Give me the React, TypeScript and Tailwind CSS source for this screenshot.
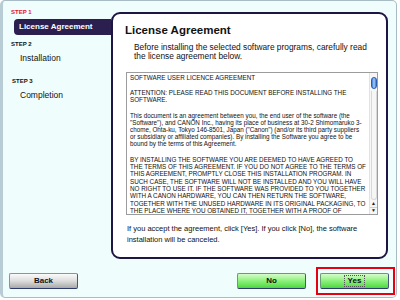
export default function App() {
  return (
    <div className="w-[400px] h-[300px] bg-white font-['Liberation_Sans',Arial,sans-serif] text-[#111]">
      <div className="w-[397px] h-[298px] flex flex-col border border-[#a8bcc5] border-l-[3px] border-l-[#b7ccd4] rounded-[5px] bg-[#f0fdfd]">
        {/* Top area */}
        <div className="flex">
          {/* Steps sidebar */}
          <aside className="w-[108px] shrink-0 flex flex-col pt-[7px]">
            <div className="pl-[8px] h-[8px] leading-[8px] text-[6px] font-bold text-[#e8141c]">STEP 1</div>
            <div className="mt-[3px] ml-[11px] h-[16px] flex items-center pl-[5px] rounded-l-[4px] bg-[#2b1f4f] text-white text-[8px] font-bold">
              License Agreement
            </div>
            <div className="mt-[4.5px] pl-[8px] h-[8px] leading-[8px] text-[6px] font-bold">STEP 2</div>
            <div className="mt-[4.5px] pl-[17px] h-[12px] leading-[12px] text-[8.5px]">Installation</div>
            <div className="mt-[12.7px] pl-[9px] h-[8px] leading-[8px] text-[6px] font-bold">STEP 3</div>
            <div className="mt-[4.3px] pl-[17px] h-[12px] leading-[12px] text-[8.5px]">Completion</div>
          </aside>

          {/* Main panel */}
          <section className="mt-[11px] w-[277px] h-[247px] shrink-0 flex flex-col border-2 border-[#1d1645] rounded-[9px] bg-white pt-[9px]">
            <h1 className="pl-[12px] text-[11.5px] leading-[14px] font-bold">License Agreement</h1>
            <p className="mt-[5.6px] pl-[21px] text-[8.35px] leading-[9.7px]">
              Before installing the selected software programs, carefully read
              <br />
              the license agreement below.
            </p>

            {/* Agreement text box */}
            <div className="mt-[9.8px] ml-[13px] w-[252px] h-[143px] shrink-0 flex border border-[#9c9c9c] bg-white overflow-hidden">
              <div className="flex-1 overflow-hidden pl-[3px] pt-[1px] text-[6.3px] leading-[7px] whitespace-nowrap">
                <p>SOFTWARE USER LICENCE AGREEMENT</p>
                <p className="mt-[8.5px]">
                  ATTENTION: PLEASE READ THIS DOCUMENT BEFORE INSTALLING THE
                  <br />
                  SOFTWARE.
                </p>
                <p className="mt-[8.5px]">
                  This document is an agreement between you, the end user of the software (the
                  <br />
                  "Software"), and CANON Inc., having its place of business at 30-2 Shimomaruko 3-
                  <br />
                  chome, Ohta-ku, Tokyo 146-8501, Japan ("Canon") (and/or its third party suppliers
                  <br />
                  or subsidiary or affiliated companies). By installing the Software you agree to be
                  <br />
                  bound by the terms of this Agreement.
                </p>
                <p className="mt-[9px] leading-[7.3px]">
                  BY INSTALLING THE SOFTWARE YOU ARE DEEMED TO HAVE AGREED TO
                  <br />
                  THE TERMS OF THIS AGREEMENT. IF YOU DO NOT AGREE TO THE TERMS OF
                  <br />
                  THIS AGREEMENT, PROMPTLY CLOSE THIS INSTALLATION PROGRAM. IN
                  <br />
                  SUCH CASE, THE SOFTWARE WILL NOT BE INSTALLED AND YOU WILL HAVE
                  <br />
                  NO RIGHT TO USE IT. IF THE SOFTWARE WAS PROVIDED TO YOU TOGETHER
                  <br />
                  WITH A CANON HARDWARE, YOU CAN THEN RETURN THE SOFTWARE,
                  <br />
                  TOGETHER WITH THE UNUSED HARDWARE IN ITS ORIGINAL PACKAGING, TO
                  <br />
                  THE PLACE WHERE YOU OBTAINED IT, TOGETHER WITH A PROOF OF
                </p>
              </div>

              {/* Scrollbar */}
              <div className="w-[8px] shrink-0 flex flex-col items-center bg-[#f6f6f6] border-l border-[#e2e2e2]">
                <div className="mt-[4px] w-[6px] h-[12px] rounded-full border border-[#2c5bb0] bg-gradient-to-r from-[#3d79d8] via-[#a8cdf6] to-[#3d79d8]"></div>
                <div className="flex-1 w-[6px] mt-[2px] rounded-b-[3px] border border-t-0 border-[#d8d8d8]"></div>
                <div className="h-[7px] flex items-center text-[5px] leading-none text-[#222]">▲</div>
                <div className="h-[7px] w-full flex items-center justify-center border-t border-[#d0d0d0] text-[5px] leading-none text-[#222]">▼</div>
              </div>
            </div>

            <p className="mt-[7.8px] pl-[14px] text-[7.5px] leading-[11px]">
              If you accept the agreement, click [Yes]. If you click [No], the software
              <br />
              installation will be canceled.
            </p>
          </section>
        </div>

        {/* Buttons */}
        <div className="mt-[8px] flex items-center">
          <button className="ml-[6px] w-[69px] h-[16px] rounded-[2px] border border-[#8a93a6] border-b-[#2c3a6e] border-r-[#4a5680] bg-gradient-to-b from-[#fbfbfb] via-[#dcdcdc] to-[#a9a9a9] text-[8px] font-bold leading-none">
            Back
          </button>
          <button className="ml-auto w-[69px] h-[16px] rounded-[2px] border border-[#6a9a78] border-b-[#2c3a6e] border-r-[#4a5680] bg-gradient-to-b from-[#d4fdc9] via-[#8af07a] to-[#49d83a] text-[8px] font-bold leading-none">
            No
          </button>
          <div className="ml-[10px] mr-[1px] w-[79px] h-[28px] flex items-center border-2 border-[#e60012] pl-[2px]">
            <button className="w-[69px] h-[16px] flex items-center justify-center rounded-[2px] border border-[#6a9a78] border-b-[#2c3a6e] border-r-[#4a5680] bg-gradient-to-b from-[#d4fdc9] via-[#8af07a] to-[#49d83a] text-[8px] font-bold leading-none">
              <span className="px-[3px] py-[1px] border border-dotted border-[#555]">Yes</span>
            </button>
          </div>
        </div>
      </div>
    </div>
  )
}
